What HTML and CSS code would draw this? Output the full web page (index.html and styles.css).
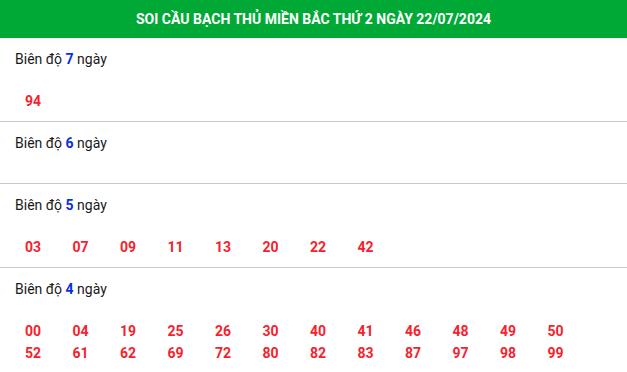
FILE: index.html
```html
<!DOCTYPE html>
<html lang="vi">
<head>
<meta charset="utf-8">
<title>Soi cầu bạch thủ miền Bắc</title>
<link rel="stylesheet" href="styles.css">
</head>
<body>
<div class="box">
  <h2 class="title">SOI CẦU BẠCH THỦ MIỀN BẮC THỨ 2 NGÀY 22/07/2024</h2>
  <div class="sec">
    <div class="label">Biên độ <b>7</b> ngày</div>
    <div class="nums"><span>94</span></div>
  </div>
  <div class="sec">
    <div class="label">Biên độ <b>6</b> ngày</div>
    <div class="nums"></div>
  </div>
  <div class="sec">
    <div class="label">Biên độ <b>5</b> ngày</div>
    <div class="nums"><span>03</span><span>07</span><span>09</span><span>11</span><span>13</span><span>20</span><span>22</span><span>42</span></div>
  </div>
  <div class="sec">
    <div class="label">Biên độ <b>4</b> ngày</div>
    <div class="nums"><span>00</span><span>04</span><span>19</span><span>25</span><span>26</span><span>30</span><span>40</span><span>41</span><span>46</span><span>48</span><span>49</span><span>50</span><span>52</span><span>61</span><span>62</span><span>69</span><span>72</span><span>80</span><span>82</span><span>83</span><span>87</span><span>97</span><span>98</span><span>99</span></div>
  </div>
</div>
</body>
</html>
```
FILE: styles.css
```css
html, body {
  margin: 0;
  padding: 0;
  background: #fff;
}
body {
  font-family: Roboto, "Liberation Sans", sans-serif;
  color: #222;
}
.title {
  margin: 0;
  height: 38px;
  line-height: 38px;
  background: #00a935;
  color: #fff;
  text-align: center;
  font-size: 14px;
  font-weight: 700;
  letter-spacing: 0;
}
.sec {
  border-bottom: 1px solid #c8c8c8;
  padding: 11px 0 0;
}
.label {
  padding-left: 15px;
  font-size: 14px;
  line-height: 20px;
  color: #1a1a1a;
}
.label b {
  color: #0a2ee0;
  font-weight: 700;
}
.nums {
  display: grid;
  grid-template-columns: repeat(12, 47.5px);
  padding: 21px 0 9px 25px;
}
.nums span {
  font-size: 14px;
  font-weight: 700;
  line-height: 22px;
  color: #f5222d;
}
```
